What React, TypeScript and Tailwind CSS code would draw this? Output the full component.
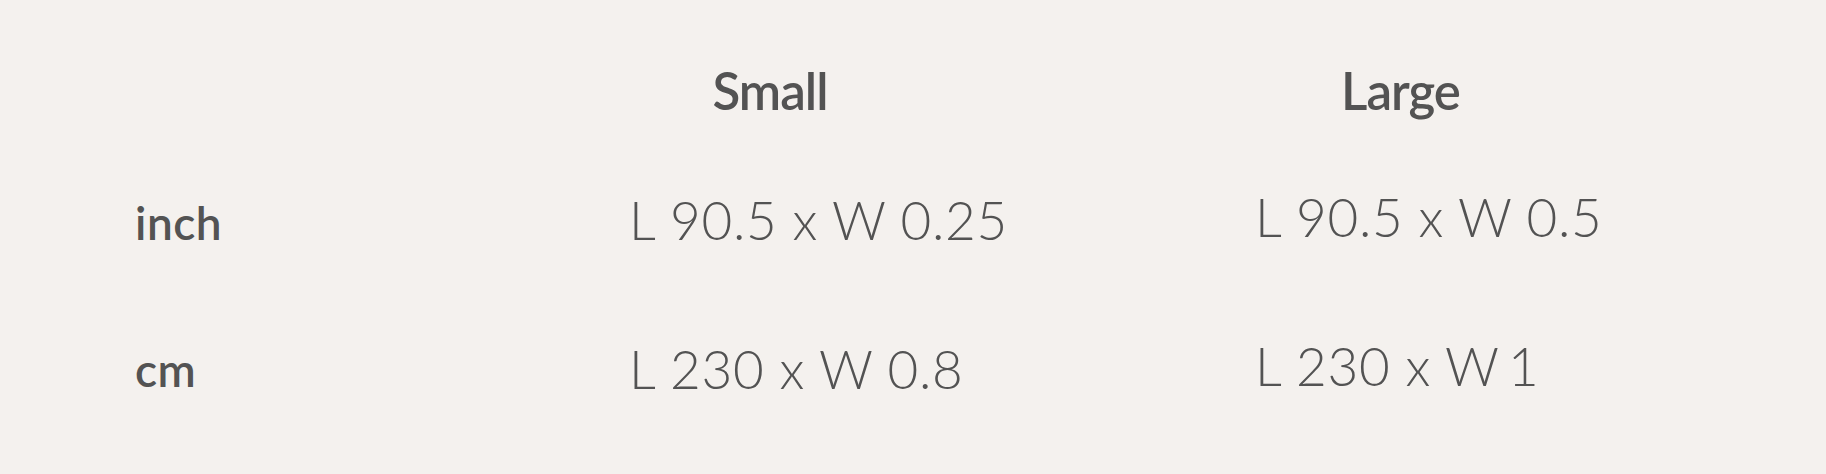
import React from "react";

export default function App() {
  return (
    <div className="w-[1826px] h-[474px] bg-[#f4f1ee] text-[#535353] font-['Lato',sans-serif] pl-[135px] flex flex-col">
      <div className="h-[130px] pt-[65px] flex">
        <div className="w-[494px] shrink-0" />
        <div className="w-[626px] shrink-0">
          <div className="w-[282px] text-center text-[51px] leading-none font-semibold tracking-[-1px]">Small</div>
        </div>
        <div className="flex-1">
          <div className="w-[291px] text-center text-[51px] leading-none font-semibold tracking-[-1px]">Large</div>
        </div>
      </div>
      <div className="h-[150px] flex items-start">
        <div className="w-[494px] shrink-0 mt-[70px] text-[46px] leading-none font-semibold tracking-[0.5px]">inch</div>
        <div className="w-[626px] shrink-0 mt-[63px] text-[53px] leading-none font-light tracking-[0.7px]">L 90.5 x W 0.25</div>
        <div className="flex-1 mt-[60px] text-[53px] leading-none font-light tracking-[0.7px]">L 90.5 x W 0.5</div>
      </div>
      <div className="flex-1 flex items-start">
        <div className="w-[494px] shrink-0 mt-[67px] text-[46px] leading-none font-semibold tracking-[0.5px]">cm</div>
        <div className="w-[626px] shrink-0 mt-[62px] text-[53px] leading-none font-light tracking-[0.7px]">L 230 x W 0.8</div>
        <div className="flex-1 mt-[59px] text-[53px] leading-none font-light tracking-[0.7px]">L 230 x W<span className="tracking-[-6px]"> </span>1</div>
      </div>
    </div>
  );
}
